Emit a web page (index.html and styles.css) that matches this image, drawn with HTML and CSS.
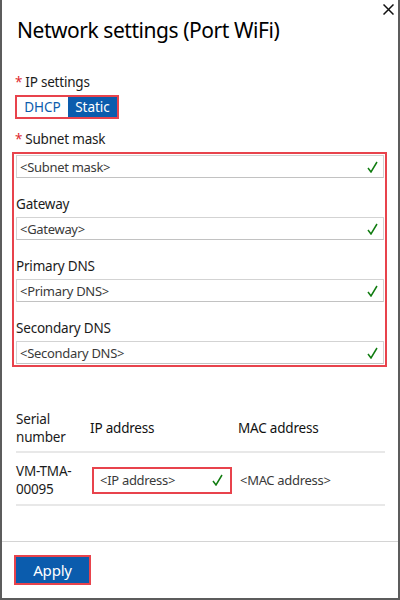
FILE: index.html
```html
<!DOCTYPE html>
<html>
<head>
<meta charset="utf-8">
<link rel="stylesheet" href="styles.css">
</head>
<body>
<div class="panel">
  <button class="close" aria-label="Close">
    <svg width="11" height="11" viewBox="0 0 11 11"><path d="M0.5 0.5 L10.5 10.5 M10.5 0.5 L0.5 10.5" stroke="#111" stroke-width="1.5" fill="none"/></svg>
  </button>
  <div class="content">
    <h1 class="title">Network settings (Port WiFi)</h1>

    <div class="label req">IP settings</div>
    <div class="toggle">
      <span class="opt">DHCP</span>
      <span class="opt active">Static</span>
    </div>

    <div class="label req sub">Subnet mask</div>
    <div class="fields">
      <div class="input"><span>&lt;Subnet mask&gt;</span><svg class="check" width="11" height="12" viewBox="0 0 11 12"><path d="M1 7 L4 11 L10 1" stroke="#107c10" stroke-width="1.5" fill="none"/></svg></div>
      <div class="label field-label">Gateway</div>
      <div class="input"><span>&lt;Gateway&gt;</span><svg class="check" width="11" height="12" viewBox="0 0 11 12"><path d="M1 7 L4 11 L10 1" stroke="#107c10" stroke-width="1.5" fill="none"/></svg></div>
      <div class="label field-label">Primary DNS</div>
      <div class="input"><span>&lt;Primary DNS&gt;</span><svg class="check" width="11" height="12" viewBox="0 0 11 12"><path d="M1 7 L4 11 L10 1" stroke="#107c10" stroke-width="1.5" fill="none"/></svg></div>
      <div class="label field-label">Secondary DNS</div>
      <div class="input"><span>&lt;Secondary DNS&gt;</span><svg class="check" width="11" height="12" viewBox="0 0 11 12"><path d="M1 7 L4 11 L10 1" stroke="#107c10" stroke-width="1.5" fill="none"/></svg></div>
    </div>

    <div class="table">
      <div class="row head">
        <div class="c1">Serial<br>number</div>
        <div class="c2">IP address</div>
        <div class="c3">MAC address</div>
      </div>
      <div class="row body">
        <div class="c1">VM-TMA-<br>00095</div>
        <div class="c2"><div class="input ip"><span>&lt;IP address&gt;</span><svg class="check" width="11" height="12" viewBox="0 0 11 12"><path d="M1 7 L4 11 L10 1" stroke="#107c10" stroke-width="1.5" fill="none"/></svg></div></div>
        <div class="c3 mac">&lt;MAC address&gt;</div>
      </div>
    </div>
  </div>
  <div class="footer">
    <button class="apply">Apply</button>
  </div>
</div>
</body>
</html>
```

FILE: styles.css
```css
* { box-sizing: border-box; }
html, body { margin: 0; padding: 0; background: #fff; }
body { font-family: "Noto Sans", "Open Sans", sans-serif; color: #1b1b1b; }

.panel {
  position: relative;
  width: 400px;
  height: 600px;
  border-left: 2px solid #5c5c5c;
  border-right: 2px solid #5c5c5c;
  border-bottom: 2px solid #5c5c5c;
  display: flex;
  flex-direction: column;
}

.close {
  position: absolute;
  top: 4px;
  right: 4px;
  border: 0;
  background: none;
  padding: 0;
  width: 11px;
  height: 11px;
}
.close svg { display: block; }

.content {
  flex: 1;
  padding: 0 10px;
}

.title {
  margin: 16px 0 0 5px;
  font-size: 21px;
  line-height: 28px;
  font-weight: 400;
  color: #000;
  letter-spacing: -0.45px;
}

.label {
  font-size: 13.5px;
  letter-spacing: -0.2px;
  line-height: 20px;
  color: #1b1b1b;
}
.label.req { margin: 28px 0 0 3px; }
.label.req::before { content: "*"; color: #e0282e; margin-right: 3px; }
.label.sub { margin-top: 10px; margin-bottom: 3px; }

.toggle {
  display: flex;
  width: fit-content;
  border: 2px solid #e8434c;
  margin: 3px 0 0 3px;
  height: 24px;
}
.opt {
  display: flex;
  align-items: center;
  justify-content: center;
  width: 51px;
  font-size: 13.5px;
  color: #0b5cad;
  background: #fff;
}
.opt.active { background: #0b5cad; color: #fff; width: 49px; }

.fields {
  border: 2px solid #e8434c;
  padding: 1px 1px 1px 2px;
  width: 375px;
  margin-left: 0;
}
.field-label { margin: 16px 0 3px 0; }

.input {
  height: 23px;
  border: 1px solid #d3d3d3;
  border-bottom-color: #c2c2c2;
  display: flex;
  align-items: center;
  justify-content: space-between;
  padding: 0 5px 0 3px;
  font-size: 13px;
  letter-spacing: -0.3px;
  color: #3a3a3a;
  background: #fff;
}
.check { display: block; }

.table {
  margin: 43px 0 0 4px;
  width: 369px;
  font-size: 13.5px;
  letter-spacing: -0.2px;
}
.row {
  display: grid;
  grid-template-columns: 74px 148px 1fr;
  align-items: center;
  border-bottom: 2px solid #e8e8e8;
  line-height: 18px;
}
.row.head { padding: 0 0 5px; color: #111; }
.row.body { padding: 9px 0 6px; }
.c1 { color: #1b1b1b; }
.input.ip {
  border: 2px solid #e8434c;
  height: 27px;
  margin-left: 2px;
  margin-right: 6px;
  padding: 0 7px 0 6px;
}
.mac { font-size: 13px; letter-spacing: -0.3px; color: #3a3a3a; padding-left: 2px; }

.footer {
  border-top: 1px solid #d4d4d4;
  padding: 13px 12px 0;
  height: 57px;
  flex: none;
}
.apply {
  border: 2px solid #e8434c;
  background: #0b5cad;
  color: #fff;
  font-family: "Noto Sans", "Open Sans", sans-serif;
  font-size: 15px;
  letter-spacing: -0.2px;
  width: 77px;
  height: 30px;
  padding: 0;
}
```
